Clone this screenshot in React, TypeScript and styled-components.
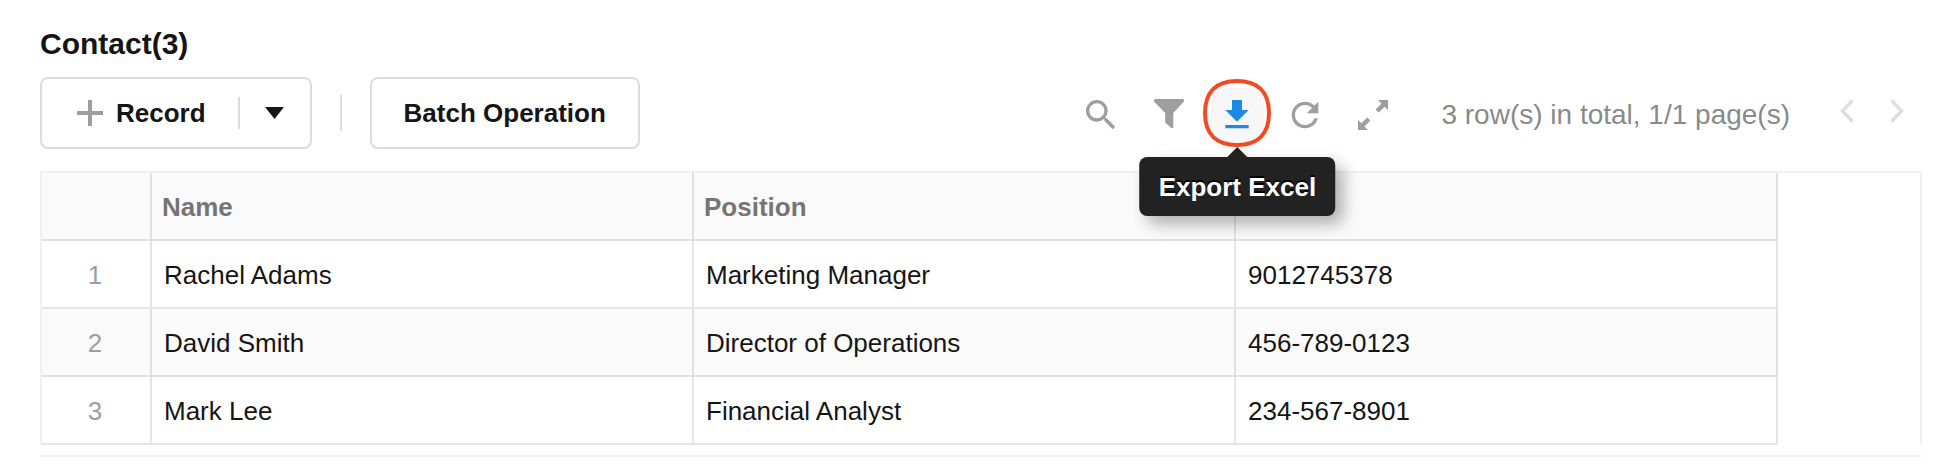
import React from "react";
import styled, { createGlobalStyle } from "styled-components";

const GlobalStyle = createGlobalStyle`
  *, *::before, *::after { box-sizing: border-box; }
  body {
    margin: 0;
    background: #fff;
    color: #151515;
    font-family: "Liberation Sans", Arial, sans-serif;
    font-size: 26px;
  }
  button {
    margin: 0;
    padding: 0;
    border: 0;
    background: none;
    color: inherit;
    font: inherit;
    cursor: pointer;
  }
  svg { display: block; flex: none; }
`;

const Page = styled.main`
  padding: 26px 24px 16px 40px;
`;

const Title = styled.h1`
  margin: 0 0 15px;
  font-size: 30px;
  line-height: 36px;
  font-weight: 700;
`;

const Toolbar = styled.div`
  display: flex;
  align-items: center;
  margin-bottom: 22px;
  white-space: nowrap;
`;

const SplitButton = styled.div`
  display: flex;
  align-items: center;
  height: 72px;
  border: 2px solid #dcdcdc;
  border-radius: 8px;
`;

const AddButton = styled.button`
  display: flex;
  align-items: center;
  gap: 13px;
  height: 100%;
  padding: 0 32px 0 35px;
  font-weight: 700;
`;

const CaretButton = styled.button`
  display: flex;
  align-items: center;
  justify-content: center;
  width: 70px;
  height: 100%;
`;

const Divider = styled.span<{ $height: number; $gap?: number }>`
  width: 2px;
  height: ${(p) => p.$height}px;
  margin: 0 ${(p) => p.$gap ?? 0}px;
  background: #dcdcdc;
`;

const OutlineButton = styled.button`
  height: 72px;
  padding: 0 32px;
  border: 2px solid #dcdcdc;
  border-radius: 8px;
  font-weight: 700;
`;

const Tools = styled.div`
  display: flex;
  align-items: center;
  gap: 14px;
  margin-left: auto;
  padding-top: 4px;
`;

const IconButton = styled.button<{ $active?: boolean }>`
  display: flex;
  align-items: center;
  justify-content: center;
  width: 54px;
  height: 54px;
  border-radius: 8px;
  color: ${(p) => (p.$active ? "#1e88e5" : "#9e9e9e")};
  background: ${(p) => (p.$active ? "#f7f7f7" : "transparent")};
`;

const TipAnchor = styled.div`
  position: relative;
`;

const Ring = styled.svg`
  position: absolute;
  top: -9px;
  left: -7px;
  pointer-events: none;
`;

const Tooltip = styled.div`
  position: absolute;
  z-index: 1;
  top: 69px;
  left: 50%;
  transform: translateX(-50%);
  padding: 1px 19px 0;
  border-radius: 8px;
  background: #222;
  color: #fff;
  font-weight: 700;
  line-height: 58px;
  text-shadow: 0 -2px 0 #000;
  box-shadow: 8px 8px 16px rgba(0, 0, 0, 0.3);

  &::before {
    content: "";
    position: absolute;
    bottom: 100%;
    left: 50%;
    margin-left: -10px;
    border: 10px solid transparent;
    border-top-width: 0;
    border-bottom-color: #222;
  }
`;

const Summary = styled.span`
  margin: 0 32px 0 41px;
  padding-top: 4px;
  color: #8a8a8a;
  font-size: 28px;
`;

const Pager = styled.nav`
  display: flex;
  padding-bottom: 4px;
`;

const PageButton = styled.button`
  display: flex;
  align-items: center;
  justify-content: center;
  width: 50px;
  height: 54px;
  color: #dedede;
`;

const TableFrame = styled.div`
  padding-right: 142px;
  border: 2px solid #f0f0f0;
  border-bottom: 0;
`;

const Table = styled.table`
  width: 100%;
  table-layout: fixed;
  border-collapse: separate;
  border-spacing: 0;

  tbody tr:nth-child(even) {
    background: #fafafa;
  }
`;

const HeadCell = styled.th<{ $width?: number }>`
  width: ${(p) => (p.$width ? `${p.$width}px` : "auto")};
  height: 68px;
  padding: 2px 10px 0;
  border: solid rgba(0, 0, 0, 0.1);
  border-width: 0 2px 2px 0;
  background: #fafafa;
  color: #757575;
  text-align: left;
  font-weight: 700;
`;

const Cell = styled.td<{ $index?: boolean }>`
  height: 68px;
  padding: ${(p) => (p.$index ? "2px 2px 0 0" : "2px 12px 0")};
  border: solid rgba(0, 0, 0, 0.1);
  border-width: 0 2px 2px 0;
  color: ${(p) => (p.$index ? "#9e9e9e" : "inherit")};
  text-align: ${(p) => (p.$index ? "center" : "left")};
`;

const BottomRule = styled.hr`
  height: 2px;
  margin: 10px 0 0;
  border: 0;
  background: #f3f3f3;
`;

const contacts = [
  { name: "Rachel Adams", position: "Marketing Manager", phone: "9012745378" },
  { name: "David Smith", position: "Director of Operations", phone: "456-789-0123" },
  { name: "Mark Lee", position: "Financial Analyst", phone: "234-567-8901" },
];

const MaterialIcon = ({ d }: { d: string }) => (
  <svg width="40" height="40" viewBox="0 0 24 24" fill="currentColor" aria-hidden="true">
    <path d={d} />
  </svg>
);

const PlusIcon = () => (
  <svg width="26" height="26" viewBox="0 0 26 26" stroke="#9e9e9e" strokeWidth="4" aria-hidden="true">
    <path d="M13 0V26M0 13H26" />
  </svg>
);

const CaretIcon = () => (
  <svg width="19" height="12" viewBox="0 0 19 12" fill="#151515" aria-hidden="true">
    <path d="M0 0H19L9.500 12Z" />
  </svg>
);

const FilterIcon = () => (
  <svg width="30" height="40" viewBox="0 0 30 40" fill="currentColor" aria-hidden="true">
    <path d="M1 4H29L30 5V6.500L19.300 18V33H17.500L11.200 27.500V18L0 6.500V5Z" />
  </svg>
);

const ExpandIcon = () => (
  <svg width="30" height="30" viewBox="0 0 30 30" fill="currentColor" aria-hidden="true">
    <path d="M20 0H30V10L26.700 6.700L20.600 12.600L17.600 9.600L23.500 3.600Z" />
    <path d="M10 30H0V20L3.300 23.300L9.400 17.400L12.400 20.400L6.500 26.400Z" />
  </svg>
);

const ChevronIcon = ({ direction }: { direction: "left" | "right" }) => (
  <svg width="14" height="24" viewBox="0 0 14 24" fill="none" stroke="currentColor" strokeWidth="3.500" aria-hidden="true">
    <path d={direction === "left" ? "M12.500 1.500L2.500 12L12.500 22.500" : "M1.500 1.500L11.500 12L1.500 22.500"} />
  </svg>
);

export default function App() {
  return (
    <>
      <GlobalStyle />
      <Page>
        <Title>Contact(3)</Title>
        <Toolbar>
          <SplitButton>
            <AddButton type="button">
              <PlusIcon />
              Record
            </AddButton>
            <Divider $height={32} />
            <CaretButton type="button" aria-label="More record options">
              <CaretIcon />
            </CaretButton>
          </SplitButton>
          <Divider $height={36} $gap={28} />
          <OutlineButton type="button">Batch Operation</OutlineButton>

          <Tools>
            <IconButton type="button" aria-label="Search">
              <MaterialIcon d="M15.500 14h-.79l-.28-.27A6.471 6.471 0 0 0 16 9.500 6.500 6.500 0 1 0 9.500 16c1.610 0 3.090-.59 4.230-1.570l.27.28v.79l5 4.990L20.490 19l-4.990-5zm-6 0C7.010 14 5 11.990 5 9.500S7.010 5 9.500 5 14 7.010 14 9.500 11.990 14 9.500 14z" />
            </IconButton>
            <IconButton type="button" aria-label="Filter">
              <FilterIcon />
            </IconButton>
            <TipAnchor>
              <IconButton type="button" $active aria-label="Export" aria-describedby="export-tip">
                <MaterialIcon d="M19 9h-4V3H9v6H5l7 7 7-7zM5 18v2h14v-2H5z" />
              </IconButton>
              <Ring width="68" height="68" viewBox="0 0 68 68" fill="none" stroke="#f44a22" strokeWidth="4" aria-hidden="true">
                <path d="M34 2C55 2 66 13 66 34S55 66 34 66 2 55 2 34 13 2 34 2Z" />
              </Ring>
              <Tooltip role="tooltip" id="export-tip">Export Excel</Tooltip>
            </TipAnchor>
            <IconButton type="button" aria-label="Refresh">
              <MaterialIcon d="M17.650 6.350A7.958 7.958 0 0 0 12 4c-4.420 0-7.990 3.580-7.990 8s3.570 8 7.990 8c3.730 0 6.840-2.550 7.730-6h-2.080A5.990 5.990 0 0 1 12 18c-3.310 0-6-2.690-6-6s2.690-6 6-6c1.660 0 3.140.69 4.220 1.780L13 11h7V4l-2.350 2.350z" />
            </IconButton>
            <IconButton type="button" aria-label="Full screen">
              <ExpandIcon />
            </IconButton>
          </Tools>
          <Summary>3 row(s) in total, 1/1 page(s)</Summary>
          <Pager aria-label="Pages">
            <PageButton type="button" aria-label="Previous page">
              <ChevronIcon direction="left" />
            </PageButton>
            <PageButton type="button" aria-label="Next page">
              <ChevronIcon direction="right" />
            </PageButton>
          </Pager>
        </Toolbar>

        <TableFrame>
          <Table>
            <thead>
              <tr>
                <HeadCell $width={110} aria-label="Row number" />
                <HeadCell>Name</HeadCell>
                <HeadCell>Position</HeadCell>
                <HeadCell aria-label="Phone" />
              </tr>
            </thead>
            <tbody>
              {contacts.map((c, i) => (
                <tr key={c.phone}>
                  <Cell $index>{i + 1}</Cell>
                  <Cell>{c.name}</Cell>
                  <Cell>{c.position}</Cell>
                  <Cell>{c.phone}</Cell>
                </tr>
              ))}
            </tbody>
          </Table>
        </TableFrame>
        <BottomRule />
      </Page>
    </>
  );
}
